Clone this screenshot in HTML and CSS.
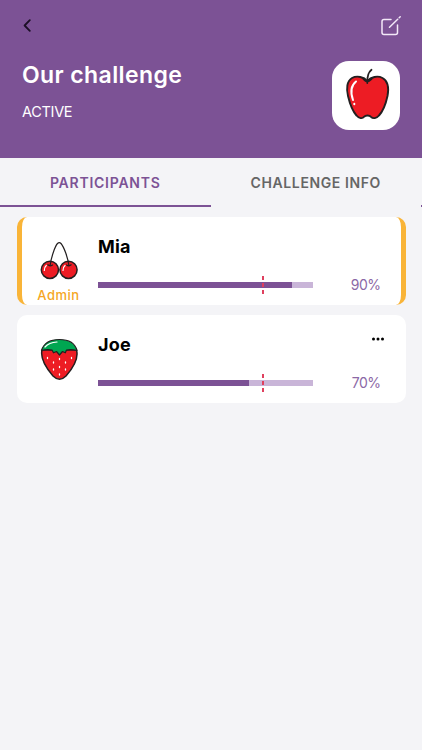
FILE: index.html
```
<!DOCTYPE html>
<html lang="en">
<head>
    <meta charset="UTF-8">
    <meta name="viewport" content="width=device-width, initial-scale=1.0">
    <title>Our challenge</title>
    <link rel="stylesheet" href="styles.css">
</head>
<body>
    <header class="header">
        <div class="toolbar">
            <svg class="back" width="12" height="14" viewBox="0 0 12 14"><path d="M7.800 1.200 L2.600 6.500 L7.800 11.800"/></svg>
            <svg class="edit" width="22" height="22" viewBox="0 0 22 22"><path d="M12 4.500H5Q3 4.500 3 6.500V17.500Q3 19.500 5 19.500H16.500Q18.500 19.500 18.500 17.500V10"/><path d="M10.500 12.300L18.700 4.300M20.200 2.800L21.200 1.800"/></svg>
        </div>
        <div class="summary">
            <div>
                <h1 class="title">Our challenge</h1>
                <div class="status">ACTIVE</div>
            </div>
            <div class="tile">
                <svg width="68" height="68" viewBox="0 0 68 68">
                    <path class="red apple" d="M35.300 20C32 16 25 14.200 20 17C14.800 20 14.200 28 16 35C18 43.500 20.500 50 24.500 54.500C27 57.500 30.500 58 32 55.800C33.500 54 37.500 54 39 55.800C41 58 44.500 57.500 47 54.500C52 49 54 42 55.500 35C57 27 56 20 50.500 17C45.500 14.200 39 16 35.300 20Z"/>
                    <path class="line" d="M31.500 18.200Q33.500 20.500 35.300 20.500Q37 20.500 39.500 18.200M35.300 22C35 15 36 11.500 39.500 8.800"/>
                    <path class="shine" d="M24 20.500C18.500 25 18.500 32 21 39M22.300 42.800V43.200"/>
                </svg>
            </div>
        </div>
    </header>

    <nav class="tabs">
        <div class="tab active">PARTICIPANTS</div>
        <div class="tab info">CHALLENGE INFO</div>
        <div class="tab active"></div>
    </nav>

    <main class="list">
        <section class="card admin">
            <div class="avatar">
                <svg width="44" height="44" viewBox="0 0 44 44">
                    <circle class="red" cx="12.900" cy="31.800" r="8.600"/>
                    <circle class="red" cx="31.500" cy="31.800" r="8.600"/>
                    <path class="stem" d="M13 28C14 20 18 8 20.500 5.500Q22.300 3.800 24 5.500C27 9 31 20 32 28"/>
                    <path class="stem" d="M10.800 26.800Q13 28.600 15.500 27M29.500 27Q32 28.600 34.200 26.800"/>
                    <path class="shine small" d="M9.300 27.500Q7 29.500 7.300 32.500M28 27.500Q25.700 29.500 26 32.500"/>
                </svg>
                <div class="role">Admin</div>
            </div>
            <div class="details">
                <div class="name">Mia</div>
                <div class="progress">
                    <div class="bar"><div class="fill" style="width: 90%"></div><div class="goal"></div></div>
                    <div class="percent">90%</div>
                </div>
            </div>
        </section>

        <section class="card">
            <div class="avatar">
                <svg width="44" height="44" viewBox="0 0 44 44">
                    <path class="red" d="M5 14C3 23 9 32 16 40Q22.500 46.500 29 40C36 32 42 23 39.500 14Z"/>
                    <path class="leaf" d="M4.500 14.500C7 6 14 3.500 22.500 3.500C31 3.500 38 7 40 14.500Q34 12.800 29.500 14L28.300 16.800L25.500 15.500L22.500 19L19.500 15.500L16.500 16.800L15 14Q10 12.800 4.500 14.500Z"/>
                    <path class="shine small" d="M8 11Q12 6.500 20 6"/>
                    <path class="seeds" d="M10.500 21.500v1M34.500 21.500v1M22.500 22.500v1M16.500 26v1M28.500 26v1M22.500 30.500v1M16.500 33v1M28.500 33v1M22.500 38v1"/>
                </svg>
            </div>
            <div class="details">
                <div class="top">
                    <div class="name">Joe</div>
                    <svg class="more" width="14" height="4" viewBox="0 0 14 4"><circle cx="2.500" cy="2" r="1.500"/><circle cx="7" cy="2" r="1.500"/><circle cx="11.500" cy="2" r="1.500"/></svg>
                </div>
                <div class="progress">
                    <div class="bar"><div class="fill" style="width: 70%"></div><div class="goal"></div></div>
                    <div class="percent">70%</div>
                </div>
            </div>
        </section>
    </main>
</body>
</html>
```

FILE: styles.css
```
* {
    box-sizing: border-box;
}
body {
    margin: 0;
    min-height: 750px;
    background-color: #f4f4f7;
    font-family: Inter, "Noto Sans", sans-serif;
}
svg {
    display: block;
    fill: none;
    stroke-linecap: round;
    stroke-linejoin: round;
}

/* Header */
.header {
    height: 158px;
    padding: 15px 21px 0 22px;
    background-color: #7c5295;
    color: #fff;
}
.toolbar {
    display: flex;
    justify-content: space-between;
    height: 46px;
}
.back {
    margin-top: 4px;
    stroke: #1c0f26;
    stroke-width: 1.8;
}
.edit {
    stroke: #f3e8f8;
    stroke-width: 1.5;
}
.summary {
    display: flex;
    justify-content: space-between;
    padding-right: 1px;
}
.title {
    margin: 0;
    font-size: 23px;
    line-height: 28px;
    font-weight: 600;
    letter-spacing: 0.4px;
}
.status {
    margin-top: 12px;
    font-size: 14.5px;
    line-height: 21px;
    letter-spacing: -0.3px;
}
.tile {
    width: 68px;
    height: 69px;
    border-radius: 17px;
    background-color: #fff;
}

/* Tabs */
.tabs {
    display: flex;
    height: 49px;
    overflow: hidden;
}
.tab {
    flex: 0 0 210.5px;
    color: #666;
    font-size: 14px;
    line-height: 50px;
    font-weight: 600;
    letter-spacing: 0.75px;
    text-align: center;
}
.tab.info {
    letter-spacing: 0.6px;
}
.tab.active {
    color: #7c5295;
    border-bottom: 2px solid #7c5295;
}

/* Participants */
.list {
    display: flex;
    flex-direction: column;
    gap: 10px;
    padding: 10px 16px 0 17px;
}
.card {
    display: flex;
    height: 88px;
    padding: 0 21px 0 20px;
    border-radius: 10px;
    background-color: #fff;
}
.card.admin {
    padding: 0 16px 0 15px;
    border-left: 5px solid #f9b438;
    border-right: 5px solid #f9b438;
}
.avatar {
    width: 44px;
    padding-top: 21px;
}
.role {
    margin: 5px 0 0 -1px;
    color: #f5a623;
    font-size: 13px;
    line-height: 16px;
    font-weight: 500;
    letter-spacing: 0.5px;
    text-align: center;
}
.details {
    flex: 1;
    margin-left: 17px;
    padding-top: 19px;
}
.top {
    display: flex;
    justify-content: space-between;
}
.name {
    color: #000;
    font-size: 18px;
    line-height: 22px;
    font-weight: 700;
    letter-spacing: 0.2px;
}
.more {
    margin-top: 3px;
    fill: #000;
}
.progress {
    display: flex;
    align-items: center;
    justify-content: space-between;
    height: 18px;
    margin-top: 17.500px;
}
.bar {
    position: relative;
    width: 215px;
    height: 6px;
    background-color: #c9b5d8;
}
.fill {
    height: 6px;
    background-color: #7c5295;
}
.goal {
    position: absolute;
    left: 164px;
    top: -6px;
    width: 2px;
    height: 18px;
    background: repeating-linear-gradient(#df405e 0 4px, transparent 4px 7px);
}
.percent {
    margin-right: 4.500px;
    color: #8b68a6;
    font-size: 14px;
    letter-spacing: -0.5px;
}

/* Artwork */
.red {
    fill: #ed1c24;
    stroke: #231f20;
    stroke-width: 1.5;
}
.apple {
    stroke-width: 1.9;
}
.leaf {
    fill: #00a651;
    stroke: #231f20;
    stroke-width: 1.2;
}
.line {
    stroke: #231f20;
    stroke-width: 1.8;
}
.stem {
    stroke: #231f20;
    stroke-width: 1.2;
}
.shine {
    stroke: #fff;
    stroke-width: 2;
}
.shine.small {
    stroke-width: 1.2;
}
.seeds {
    stroke: #fff;
    stroke-width: 1.3;
}
```
